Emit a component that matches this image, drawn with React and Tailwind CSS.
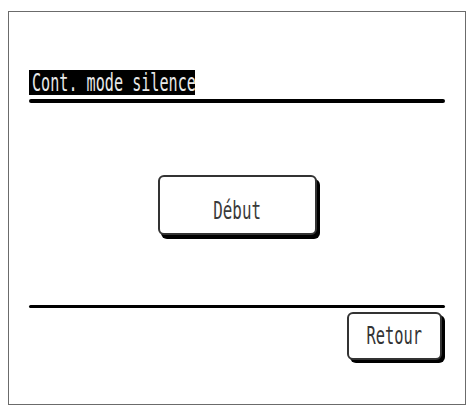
export default function App() {
  const mono = { fontFamily: '"DejaVu Sans Mono", "Liberation Mono", monospace' }

  return (
    <div className="min-h-[407px] w-[470px] bg-white pl-[8px] pt-[11px]">
      <div className="flex h-[394px] w-[458px] flex-col border border-[#6b6b6b] px-[20px]" style={mono}>
        {/* screen title */}
        <div className="mt-[58px] flex">
          <div className="flex h-[25px] w-[166px] items-center overflow-hidden bg-black pl-[3px]">
            <span className="inline-block origin-left scale-x-[0.63] whitespace-nowrap text-[24px] leading-none text-[#e8e8e8]">
              Cont. mode silence
            </span>
          </div>
        </div>
        <div className="mt-[4px] h-[4px] rounded-full bg-black" />

        {/* start button */}
        <button className="ml-[129px] mt-[72px] flex h-[60px] w-[159px] items-center justify-center rounded-[6px] border-2 border-[#333] bg-white pt-[12px] shadow-[3px_4px_0_#000]">
          <span className="inline-block scale-x-[0.66] text-[24px] leading-none text-[#3a3a3a]">Début</span>
        </button>

        <div className="mt-[70px] h-[3px] rounded-full bg-black" />

        {/* back button */}
        <button className="mr-[3px] mt-[4px] flex h-[48px] w-[95px] items-center justify-center self-end rounded-[6px] border-2 border-[#333] bg-white shadow-[3px_3px_0_#000]">
          <span className="inline-block scale-x-[0.64] text-[24px] leading-none text-[#333]">Retour</span>
        </button>
      </div>
    </div>
  )
}
